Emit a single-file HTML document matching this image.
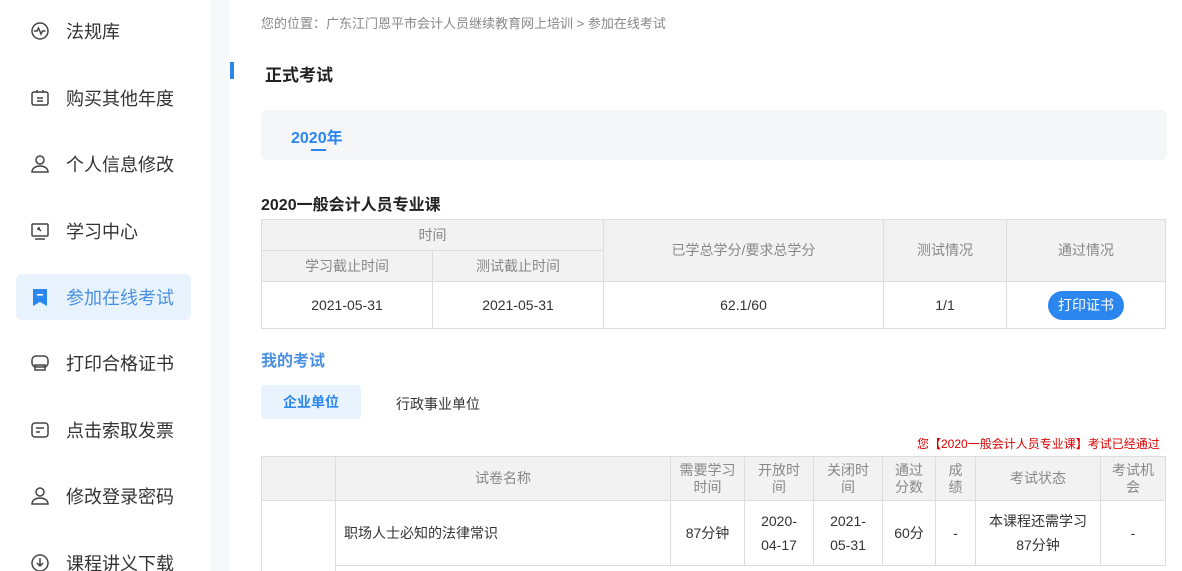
<!DOCTYPE html>
<html><head><meta charset="utf-8"><style>
*{margin:0;padding:0;box-sizing:border-box}
html,body{width:1182px;height:571px;overflow:hidden}
body{background:#fff;font-family:"Liberation Sans","Noto Sans CJK SC",sans-serif;color:#333;position:relative}
.a{position:absolute}
.side{left:0;top:0;width:210px;height:571px;background:#fff}
.gap{left:210px;top:0;width:20px;height:571px;background:#f7f8fa}
.it{position:absolute;left:30px;font-size:18px;color:#333;display:flex;align-items:center;height:24px}
.it svg{width:20px;height:20px;margin-right:16px;fill:none;stroke:#444;stroke-width:1.5}
.act{left:16px;top:274px;width:175px;height:46px;background:#e8f3fe;border-radius:6px}
.c{position:absolute;display:flex;align-items:center;justify-content:center;text-align:center;border-right:1px solid #ddd;border-bottom:1px solid #ddd;font-size:14px;line-height:17px}
.h{background:#f2f2f2;color:#888}
</style></head><body>
<div class="a side"></div><div class="a gap"></div>
<div class="a act"></div>
<div class="it" style="top:19px"><svg viewBox="0 0 20 20"><circle cx="10" cy="10" r="8"/><path d="M4 10h3l1.5-3 2.5 6 1.5-3h3"/></svg>法规库</div>
<div class="it" style="top:86px"><svg viewBox="0 0 20 20"><rect x="2" y="4" width="16" height="13" rx="2"/><path d="M7 2v3M13 2v3M7 10h6M7 13h6"/></svg>购买其他年度</div>
<div class="it" style="top:152px"><svg viewBox="0 0 20 20"><circle cx="10" cy="6" r="4"/><path d="M2 18c0-4 4-6 8-6s8 2 8 6z"/></svg>个人信息修改</div>
<div class="it" style="top:219px"><svg viewBox="0 0 20 20"><rect x="2" y="3" width="16" height="12" rx="1"/><path d="M5 18h10M8 7l3 3M8 7h2M8 7v2"/></svg>学习中心</div>
<div class="it" style="top:285px;left:30px;color:#4a90e2"><svg viewBox="0 0 20 20" style="fill:#2b86f0;stroke:none"><path d="M3 2h14v17l-7-4-7 4z"/><rect x="7" y="7" width="6" height="1.6" fill="#fff"/></svg>参加在线考试</div>
<div class="it" style="top:351px"><svg viewBox="0 0 20 20"><rect x="2" y="3" width="16" height="11" rx="4"/><path d="M5 12h10v5H5z"/></svg>打印合格证书</div>
<div class="it" style="top:418px"><svg viewBox="0 0 20 20"><rect x="2" y="3" width="16" height="14" rx="3"/><path d="M6 8h8M6 12h4"/></svg>点击索取发票</div>
<div class="it" style="top:484px"><svg viewBox="0 0 20 20"><circle cx="10" cy="6" r="4"/><path d="M2 18c0-4 4-6 8-6s8 2 8 6z"/></svg>修改登录密码</div>
<div class="it" style="top:551px"><svg viewBox="0 0 20 20"><circle cx="10" cy="10" r="8"/><path d="M10 5v8M7 10l3 3 3-3"/></svg>课程讲义下载</div>

<div class="a" style="left:261px;top:13px;font-size:13px;color:#888">您的位置：广东江门恩平市会计人员继续教育网上培训 &gt; 参加在线考试</div>
<div class="a" style="left:230px;top:62px;width:4px;height:17px;background:#2b86f0"></div>
<div class="a" style="left:265px;top:61px;font-size:17px;font-weight:bold;color:#222">正式考试</div>
<div class="a" style="left:261px;top:110px;width:906px;height:50px;background:#f5f6f7;border-radius:6px"></div>
<div class="a" style="left:291px;top:124px;font-size:16px;font-weight:bold;color:#2b86f0">2020年</div>
<div class="a" style="left:311px;top:149px;width:15px;height:2px;background:#2b86f0"></div>
<div class="a" style="left:261px;top:191px;font-size:16px;font-weight:bold;color:#222">2020一般会计人员专业课</div>

<div class="a" style="left:261px;top:219px;width:905px;height:110px;border-left:1px solid #ddd;border-top:1px solid #ddd"></div>
<div class="c h" style="left:262px;top:220px;width:342px;height:31px">时间</div>
<div class="c h" style="left:262px;top:251px;width:171px;height:31px">学习截止时间</div>
<div class="c h" style="left:433px;top:251px;width:171px;height:31px">测试截止时间</div>
<div class="c h" style="left:604px;top:220px;width:280px;height:62px">已学总学分/要求总学分</div>
<div class="c h" style="left:884px;top:220px;width:123px;height:62px">测试情况</div>
<div class="c h" style="left:1007px;top:220px;width:159px;height:62px">通过情况</div>
<div class="c" style="left:262px;top:282px;width:171px;height:47px">2021-05-31</div>
<div class="c" style="left:433px;top:282px;width:171px;height:47px">2021-05-31</div>
<div class="c" style="left:604px;top:282px;width:280px;height:47px">62.1/60</div>
<div class="c" style="left:884px;top:282px;width:123px;height:47px">1/1</div>
<div class="c" style="left:1007px;top:282px;width:159px;height:47px"><span style="background:#2b86f0;color:#fff;border-radius:15px;padding:6px 10px;font-size:14px">打印证书</span></div>

<div class="a" style="left:261px;top:347px;font-size:16px;font-weight:bold;color:#4a90e2">我的考试</div>
<div class="a" style="left:261px;top:385px;width:100px;height:34px;background:#e8f3fe;border-radius:4px;color:#2b86f0;font-weight:bold;font-size:14px;display:flex;align-items:center;justify-content:center">企业单位</div>
<div class="a" style="left:396px;top:394px;font-size:14px;color:#333">行政事业单位</div>
<div class="a" style="left:917px;top:435px;font-size:12px;color:#d00;white-space:nowrap">您【2020一般会计人员专业课】考试已经通过</div>

<div class="a" style="left:261px;top:456px;width:905px;height:120px;border-left:1px solid #ddd;border-top:1px solid #ddd"></div>
<div class="c h" style="left:262px;top:457px;width:74px;height:44px"></div>
<div class="c h" style="left:336px;top:457px;width:335px;height:44px">试卷名称</div>
<div class="c h" style="left:671px;top:457px;width:74px;height:44px">需要学习<br>时间</div>
<div class="c h" style="left:745px;top:457px;width:69px;height:44px">开放时<br>间</div>
<div class="c h" style="left:814px;top:457px;width:69px;height:44px">关闭时<br>间</div>
<div class="c h" style="left:883px;top:457px;width:53px;height:44px">通过<br>分数</div>
<div class="c h" style="left:936px;top:457px;width:40px;height:44px">成<br>绩</div>
<div class="c h" style="left:976px;top:457px;width:125px;height:44px">考试状态</div>
<div class="c h" style="left:1101px;top:457px;width:65px;height:44px">考试机<br>会</div>
<div class="c" style="left:262px;top:501px;width:74px;height:80px;border-bottom:none"></div>
<div class="c" style="left:336px;top:501px;width:335px;height:65px;justify-content:flex-start;padding-left:8px">职场人士必知的法律常识</div>
<div class="c" style="left:671px;top:501px;width:74px;height:65px">87分钟</div>
<div class="c" style="left:745px;top:501px;width:69px;height:65px;line-height:24px">2020-<br>04-17</div>
<div class="c" style="left:814px;top:501px;width:69px;height:65px;line-height:24px">2021-<br>05-31</div>
<div class="c" style="left:883px;top:501px;width:53px;height:65px">60分</div>
<div class="c" style="left:936px;top:501px;width:40px;height:65px">-</div>
<div class="c" style="left:976px;top:501px;width:125px;height:65px;line-height:24px">本课程还需学习<br>87分钟</div>
<div class="c" style="left:1101px;top:501px;width:65px;height:65px">-</div>
</body></html>
